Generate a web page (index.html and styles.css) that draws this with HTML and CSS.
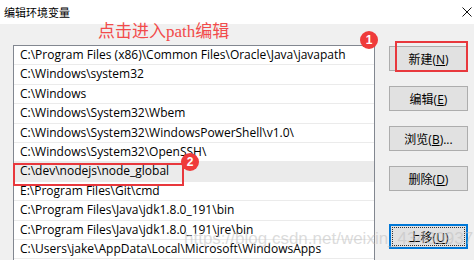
FILE: index.html
```html
<!DOCTYPE html>
<html lang="zh-CN">
<head>
    <meta charset="UTF-8">
    <title>编辑环境变量</title>
    <link rel="stylesheet" href="styles.css">
</head>
<body>
    <div class="window">
        <div class="titlebar">
            <span class="title">编辑环境变量</span>
            <svg class="close" width="10" height="10" viewBox="0 0 10 10">
                <path d="M0.5 0.5 L9.5 9.5 M9.5 0.5 L0.5 9.5" stroke="#111" stroke-width="1" fill="none"/>
            </svg>
        </div>
        <div class="content">
            <div class="path-list">
                <div class="row">C:\Program Files (x86)\Common Files\Oracle\Java\javapath</div>
                <div class="row">C:\Windows\system32</div>
                <div class="row">C:\Windows</div>
                <div class="row">C:\Windows\System32\Wbem</div>
                <div class="row">C:\Windows\System32\WindowsPowerShell\v1.0\</div>
                <div class="row">C:\Windows\System32\OpenSSH\</div>
                <div class="row selected">C:\dev\nodejs\node_global</div>
                <div class="row">E:\Program Files\Git\cmd</div>
                <div class="row">C:\Program Files\Java\jdk1.8.0_191\bin</div>
                <div class="row">C:\Program Files\Java\jdk1.8.0_191\jre\bin</div>
                <div class="row">C:\Users\jake\AppData\Local\Microsoft\WindowsApps</div>
            </div>
            <div class="buttons">
                <button class="btn">新建(<u>N</u>)</button>
                <button class="btn">编辑(<u>E</u>)</button>
                <button class="btn">浏览(<u>B</u>)...</button>
                <button class="btn">删除(<u>D</u>)</button>
                <button class="btn focused">上移(<u>U</u>)</button>
            </div>
        </div>

        <!-- annotations drawn over the dialog -->
        <div class="note">点击进入path编辑</div>
        <div class="mark mark-new"></div>
        <div class="mark mark-row"></div>
        <div class="badge badge-1">1</div>
        <div class="badge badge-2">2</div>
        <div class="watermark">https://blog.csdn.net/weixin_43430937</div>
    </div>
</body>
</html>
```

FILE: styles.css
```css
body {
    margin: 0;
    padding: 0;
    background-color: #f0f0f0;
    font-family: "Open Sans", "Noto Sans CJK SC", sans-serif;
}
.window {
    position: relative;
    width: 474px;
    height: 260px;
    overflow: hidden;
    background-color: #f0f0f0;
}
.titlebar {
    height: 24px;
    background-color: #fff;
    display: flex;
    align-items: center;
    justify-content: space-between;
    padding: 0 2px 0 4px;
}
.title {
    font-family: "Noto Sans CJK SC", sans-serif;
    font-size: 11px;
    color: #000;
    margin-top: -1px;
}
.close {
    margin-top: 0;
}
.content {
    display: flex;
    padding: 21px 0 0 13px;
    gap: 14px;
}
.path-list {
    width: 360px;
    height: 240px;
    border: 1px solid #828790;
    border-bottom: none;
    background-color: #fff;
}
.row {
    height: 18.4px;
    line-height: 18.4px;
    border-bottom: 1px solid #ebebeb;
    padding-left: 6px;
    font-size: 12px;
    color: #000;
    white-space: nowrap;
    overflow: hidden;
}
.row.selected {
    background-color: #ebebeb;
}
.buttons {
    display: flex;
    flex-direction: column;
    padding-top: 1px;
}
.btn {
    width: 79px;
    height: 25px;
    margin: 0 0 15px 0;
    padding: 0;
    background-color: #e1e1e1;
    border: 1px solid #adadad;
    font-family: "Open Sans", "Noto Sans CJK SC", sans-serif;
    font-size: 12px;
    color: #000;
    position: relative;
}
.btn:nth-child(4) {
    margin-bottom: 33px;
}
.btn.focused {
    border-color: #0078d7;
    box-shadow: inset 0 0 0 1px #0078d7;
}
.btn.focused::after {
    content: "";
    position: absolute;
    left: 2px;
    top: 2px;
    right: 2px;
    bottom: 2px;
    border: 1px dotted #333;
}
.note {
    position: absolute;
    left: 98px;
    top: 17px;
    font-family: "Liberation Serif", "Noto Sans CJK SC", serif;
    font-size: 17px;
    color: #f24b4b;
}
.mark {
    position: absolute;
    border: 2px solid #e8383d;
}
.mark-new {
    left: 395px;
    top: 41px;
    width: 69px;
    height: 27px;
}
.mark-row {
    left: 13px;
    top: 163px;
    width: 167px;
    height: 19px;
}
.badge {
    position: absolute;
    width: 18px;
    height: 18px;
    border-radius: 50%;
    background-color: #ef3b3b;
    color: #fff;
    font-family: "Liberation Sans", sans-serif;
    font-weight: bold;
    font-size: 12px;
    line-height: 18px;
    text-align: center;
}
.badge-1 {
    left: 360px;
    top: 31px;
}
.badge-2 {
    left: 181px;
    top: 153px;
}
.watermark {
    position: absolute;
    left: 184px;
    top: 229px;
    font-family: "Liberation Sans", sans-serif;
    font-size: 17px;
    color: rgba(190, 190, 190, 0.55);
    white-space: nowrap;
}
```
